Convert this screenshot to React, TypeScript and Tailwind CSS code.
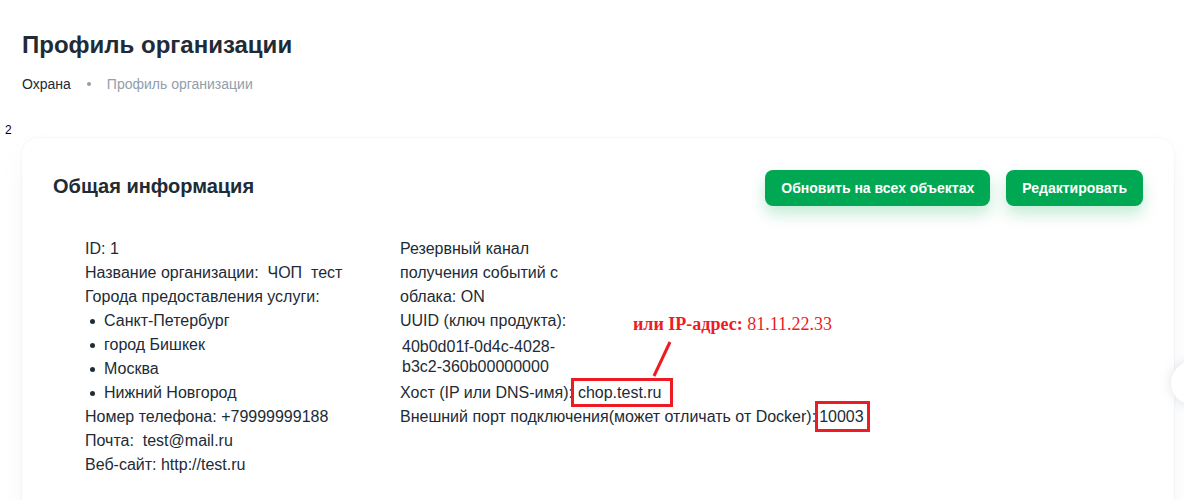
import React from "react";

const cities = ["Санкт-Петербург", "город Бишкек", "Москва", "Нижний Новгород"];

export default function App() {
  return (
    <div className="relative min-h-[500px] bg-white text-[#212b36] font-['Liberation_Sans',Arial,sans-serif] overflow-hidden">
      {/* Header */}
      <div className="px-[22px] pt-[27px]">
        <h1 className="text-[24px] leading-9 font-bold">Профиль организации</h1>
        <div className="mt-[10px] flex items-center text-[14px] leading-[22px]">
          <span>Охрана</span>
          <span className="mx-4 w-1 h-1 rounded-full bg-[#919eab]" />
          <span className="text-[#919eab]">Профиль организации</span>
        </div>
      </div>

      <div className="pl-[5px] mt-[27px] text-[12px] leading-4 text-black">2</div>

      {/* Card */}
      <div className="relative mx-[22px] mr-[10px] bg-white rounded-2xl shadow-[0_0_2px_0_rgba(145,158,171,0.2),0_12px_24px_-4px_rgba(145,158,171,0.12)] px-[31px] pt-8 pb-10">
        <div className="flex items-start justify-between">
          <h2 className="mt-[2px] text-[20px] leading-7 font-bold">Общая информация</h2>
          <div className="flex gap-4">
            <button className="h-9 px-4 rounded-lg bg-[#00a854] text-white text-[14px] font-bold shadow-[0_8px_16px_0_rgba(0,171,85,0.24)]">
              Обновить на всех объектах
            </button>
            <button className="h-9 px-4 rounded-lg bg-[#00a854] text-white text-[14px] font-bold shadow-[0_8px_16px_0_rgba(0,171,85,0.24)]">
              Редактировать
            </button>
          </div>
        </div>

        <div className="mt-[31px] pl-8 flex text-[16px] leading-6">
          <div className="w-[315px] shrink-0">
            <div>ID: 1</div>
            <div>Название организации:&nbsp; ЧОП&nbsp; тест</div>
            <div>Города предоставления услуги:</div>
            <ul>
              {cities.map((c) => (
                <li key={c} className="flex items-center">
                  <span className="ml-[5px] mr-[9px] w-[5px] h-[5px] rounded-full bg-[#212b36]" />
                  {c}
                </li>
              ))}
            </ul>
            <div>Номер телефона: +79999999188</div>
            <div>Почта:&nbsp; test@mail.ru</div>
            <div>Веб-сайт: http://test.ru</div>
          </div>

          <div>
            <div className="w-[180px]">Резервный канал получения событий с облака: ON</div>
            <div>UUID (ключ продукта):</div>
            <div className="w-[180px] py-1 leading-5 pl-[2px]">40b0d01f-0d4c-4028-b3c2-360b00000000</div>
            <div className="whitespace-nowrap">
              Хост (IP или DNS-имя):
              <span className="-ml-[2px] border-[3px] border-[#ed1c24] pl-[4px] pr-[8px] py-[3px]">chop.test.ru</span>
            </div>
            <div className="whitespace-nowrap">
              Внешний порт подключения(может отличать от Docker):
              <span className="-ml-[1px] border-[3px] border-[#ed1c24] pl-[1px] pr-[3px] py-[4px]">10003</span>
            </div>
          </div>
        </div>

        {/* annotation */}
        <div className="absolute left-[611px] top-[176px] whitespace-nowrap text-[18px] leading-5 text-[#ed1c24] font-['Liberation_Serif','Times_New_Roman',serif]">
          <span className="font-bold">или IP-адрес:</span> 81.11.22.33
        </div>
        <svg className="absolute left-[628px] top-[202px]" width="24" height="38" viewBox="0 0 24 38">
          <line x1="20" y1="2" x2="4" y2="36" stroke="#ed1c24" strokeWidth="3" />
        </svg>
      </div>

      {/* floating round button at the edge */}
      <div className="absolute left-[1171px] top-[361px] w-11 h-11 rounded-full bg-white shadow-[0_0_12px_rgba(145,158,171,0.3)]" />
    </div>
  );
}
